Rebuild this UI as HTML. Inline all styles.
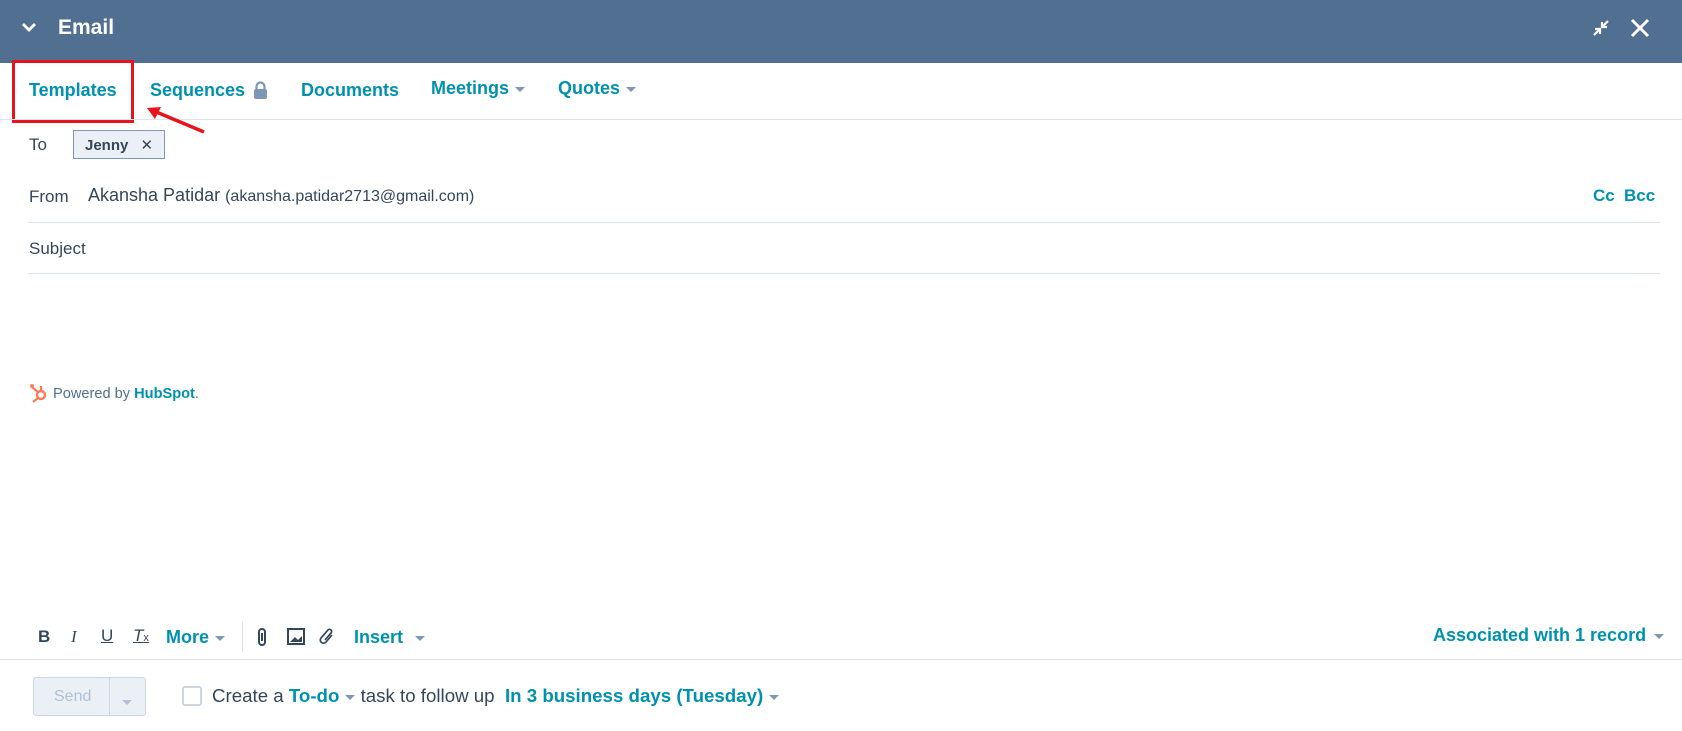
<!DOCTYPE html>
<html><head><meta charset="utf-8"><style>
*{margin:0;padding:0;box-sizing:border-box}
body{width:1682px;height:731px;background:#fff;font-family:"Liberation Sans",sans-serif;position:relative;overflow:hidden;color:#33475b}
.a{position:absolute;white-space:nowrap}
.hdr{position:absolute;left:0;top:0;width:1682px;height:63px;background:#516f90}
.tab{position:absolute;top:80px;font-size:18px;font-weight:bold;color:#0091ae}
.lbl{font-size:17px;color:#33475b}
.line{position:absolute;height:1px;background:#dfe3eb}
.teal{color:#0091ae;font-weight:bold}
.caret{display:inline-block;width:0;height:0;border-left:5px solid transparent;border-right:5px solid transparent;border-top:5px solid #7c98b6;vertical-align:middle;margin-left:6px}
</style></head><body>
<div class="hdr"></div>
<svg class="a" style="left:20px;top:20px" width="18" height="16" viewBox="0 0 18 16"><path d="M3 4l6 6 6-6" stroke="#fff" stroke-width="2.8" fill="none"/></svg>
<div class="a" style="left:58px;top:16px;font-size:21px;font-weight:bold;color:#fff">Email</div>
<svg class="a" style="left:1591px;top:18px" width="20" height="20" viewBox="0 0 20 20"><path d="M3 17l6-6M4 11h5v5M17 3l-6 6M16 9h-5V4" stroke="#fff" stroke-width="2.2" fill="none"/></svg>
<svg class="a" style="left:1629px;top:17px" width="22" height="22" viewBox="0 0 22 22"><path d="M3 3l16 16M19 3L3 19" stroke="#fff" stroke-width="3" fill="none"/></svg>

<div class="tab" style="left:29px">Templates</div>
<div class="tab" style="left:150px">Sequences</div>
<svg class="a" style="left:253px;top:81px" width="15" height="18" viewBox="0 0 15 18"><path d="M3.5 8V5.5a4 4 0 018 0V8" stroke="#7c98b6" stroke-width="2.2" fill="none"/><rect x="1" y="8" width="13" height="10" rx="2" fill="#7c98b6"/></svg>
<div class="tab" style="left:301px">Documents</div>
<div class="tab" style="left:431px;top:78px">Meetings<span class="caret"></span></div>
<div class="tab" style="left:558px;top:78px">Quotes<span class="caret"></span></div>
<div class="a" style="left:12px;top:60px;width:122px;height:63px;border:3px solid #e8141c"></div>
<div class="line" style="left:0;top:119px;width:1682px"></div>
<svg class="a" style="left:140px;top:100px" width="70" height="40" viewBox="0 0 70 40"><path d="M64 32L14 11" stroke="#e8141c" stroke-width="3.5"/><path d="M7 8l14-1-6 12z" fill="#e8141c"/></svg>

<div class="a lbl" style="left:29px;top:135px">To</div>
<div class="a" style="left:73px;top:130px;width:92px;height:29px;background:#eaf0f6;border:1px solid #7c98b6;font-size:15px;font-weight:bold;padding:5px 0 0 11px">Jenny <span style="font-weight:normal;margin-left:8px">✕</span></div>

<div class="a lbl" style="left:29px;top:187px">From</div>
<div class="a" style="left:88px;top:185px;font-size:18px">Akansha Patidar <span style="font-size:16px">(akansha.patidar2713@gmail.com)</span></div>
<div class="a teal" style="left:1593px;top:186px;font-size:17px">Cc</div>
<div class="a teal" style="left:1624px;top:186px;font-size:17px">Bcc</div>
<div class="line" style="left:28px;top:222px;width:1632px"></div>
<div class="a lbl" style="left:29px;top:239px">Subject</div>
<div class="line" style="left:28px;top:273px;width:1632px"></div>

<svg class="a" style="left:29px;top:382px" width="20" height="22" viewBox="0 0 20 22"><circle cx="12" cy="13" r="4" stroke="#ff7a59" stroke-width="2.4" fill="none"/><path d="M12 9V4M9 10L3 5M9 16l-5 4" stroke="#ff7a59" stroke-width="2.2"/><circle cx="3" cy="4" r="2" fill="#ff7a59"/></svg>
<div class="a" style="left:53px;top:386px;font-size:14.6px;color:#516f90">Powered by <b style="color:#0091ae">HubSpot</b>.</div>

<div class="a" style="left:38px;top:627px;font-size:17px;font-weight:bold">B</div>
<div class="a" style="left:71px;top:627px;font-size:17px;font-style:italic;font-family:'Liberation Serif',serif">I</div>
<div class="a" style="left:101px;top:626px;font-size:17px;text-decoration:underline">U</div>
<div class="a" style="left:133px;top:626px;font-size:17px;font-style:italic;text-decoration:underline">T<span style="font-size:11px;font-style:normal;text-decoration:none">x</span></div>
<div class="a teal" style="left:166px;top:627px;font-size:18px">More<span class="caret"></span></div>
<div class="a" style="left:242px;top:622px;width:1px;height:30px;background:#dfe3eb"></div>
<svg class="a" style="left:256px;top:627px" width="12" height="20" viewBox="0 0 12 20"><rect x="3" y="2" width="6" height="16" rx="3" stroke="#33475b" stroke-width="2" fill="none"/><path d="M6 6v8" stroke="#33475b" stroke-width="2"/></svg>
<svg class="a" style="left:287px;top:628px" width="18" height="17" viewBox="0 0 18 17"><rect x="1" y="1" width="16" height="15" stroke="#33475b" stroke-width="2" fill="none"/><path d="M3 14l5-5 3 3 4-4v6z" fill="#33475b"/></svg>
<svg class="a" style="left:318px;top:626px" width="18" height="20" viewBox="0 0 18 20"><path d="M14 9l-6 7a3 3 0 01-5-4l7-8a2 2 0 013 3l-6 7" stroke="#33475b" stroke-width="1.7" fill="none"/></svg>
<div class="a teal" style="left:354px;top:627px;font-size:18px">Insert<span class="caret" style="margin-left:12px"></span></div>
<div class="a teal" style="left:1433px;top:625px;font-size:18px">Associated with 1 record<span class="caret" style="margin-left:8px"></span></div>
<div class="line" style="left:0;top:659px;width:1682px"></div>

<div class="a" style="left:33px;top:677px;width:113px;height:39px;background:#eaf0f6;border:1px solid #cbd6e2;border-radius:3px"></div>
<div class="a" style="left:109px;top:678px;width:1px;height:37px;background:#cbd6e2"></div>
<div class="a" style="left:54px;top:688px;font-size:16px;color:#b0c1d4">Send</div>
<div class="a" style="left:122px;top:694px"><span class="caret" style="margin:0;border-top-color:#b0c1d4"></span></div>
<div class="a" style="left:182px;top:686px;width:20px;height:20px;border:2px solid #cbd6e2;border-radius:3px"></div>
<div class="a" style="left:212px;top:685px;font-size:18.7px;color:#33475b">Create a <span class="teal">To-do</span><span class="caret"></span> task to follow up &nbsp;<span class="teal">In 3 business days (Tuesday)</span><span class="caret"></span></div>
</body></html>
